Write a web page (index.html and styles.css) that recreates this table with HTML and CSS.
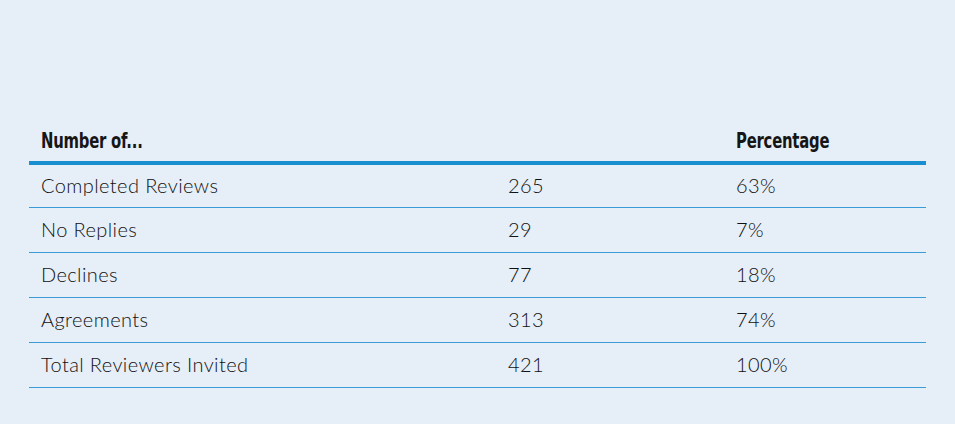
FILE: index.html
```html
<!DOCTYPE html>
<html lang="en">
<head>
  <meta charset="UTF-8" />
  <title>Reviewer Statistics</title>
  <link rel="stylesheet" href="styles.css">
</head>
<body>
  <div class="panel">
    <table class="stats">
      <thead>
        <tr>
          <th class="col-label"><span class="narrow">Number of...</span></th>
          <th class="col-num"></th>
          <th class="col-pct"><span class="narrow">Percentage</span></th>
        </tr>
      </thead>
      <tbody>
        <tr><td>Completed Reviews</td><td>265</td><td>63%</td></tr>
        <tr><td>No Replies</td><td>29</td><td>7%</td></tr>
        <tr><td>Declines</td><td>77</td><td>18%</td></tr>
        <tr><td>Agreements</td><td>313</td><td>74%</td></tr>
        <tr><td>Total Reviewers Invited</td><td>421</td><td>100%</td></tr>
      </tbody>
    </table>
  </div>
</body>
</html>
```

FILE: styles.css
```css
body {
  margin: 0;
  background: #e6eef8;
  font-family: Lato, "Open Sans", sans-serif;
  color: #111;
}

.panel {
  width: 955px;
  height: 424px;
  padding: 125px 29px 0 29px;
  box-sizing: border-box;
}

.stats {
  width: 897px;
  border-collapse: collapse;
}

.stats th {
  font-family: "DejaVu Sans Condensed", "DejaVu Sans", sans-serif;
  font-weight: bold;
  font-size: 22px;
  letter-spacing: -0.3px;
  text-align: left;
  color: #161616;
  padding: 3px 12px 0 12px;
  height: 33px;
  vertical-align: top;
  border-bottom: 4px solid #1a8fd0;
}

/* compressed headline look */
.narrow {
  display: inline-block;
  transform: scaleX(0.75);
  transform-origin: left center;
  white-space: nowrap;
}

.col-label { width: 443px; }
.col-num { width: 204px; }

.stats td {
  font-size: 20px;
  font-weight: 300;
  letter-spacing: 0.4px;
  padding: 0 12px 3px 12px;
  height: 41px;
  border-bottom: 1px solid #3b9bd9;
  vertical-align: middle;
}

.stats tbody tr:first-child td {
  height: 39px;
}
```
